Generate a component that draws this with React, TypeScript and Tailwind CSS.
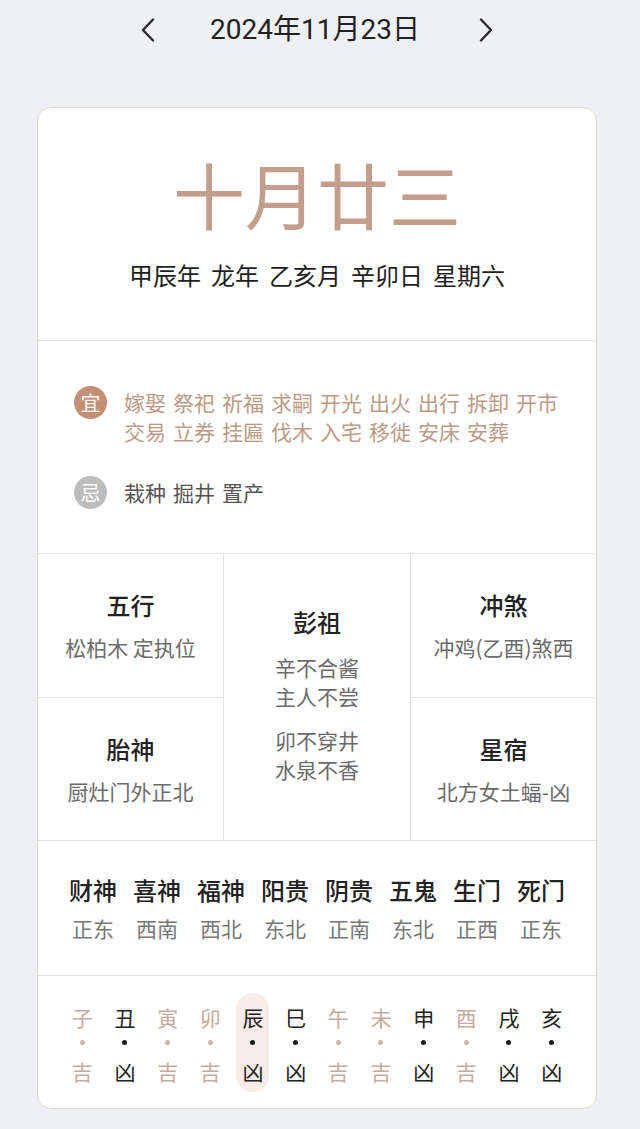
import React from 'react';

const yi = ['嫁娶', '祭祀', '祈福', '求嗣', '开光', '出火', '出行', '拆卸', '开市', '交易', '立券', '挂匾', '伐木', '入宅', '移徙', '安床', '安葬'];
const ji = ['栽种', '掘井', '置产'];
const gods: [string, string][] = [
  ['财神', '正东'], ['喜神', '西南'], ['福神', '西北'], ['阳贵', '东北'],
  ['阴贵', '正南'], ['五鬼', '东北'], ['生门', '正西'], ['死门', '正东'],
];
const hours: [string, boolean][] = [
  ['子', true], ['丑', false], ['寅', true], ['卯', true], ['辰', false], ['巳', false],
  ['午', true], ['未', true], ['申', false], ['酉', true], ['戌', false], ['亥', false],
];

function Chevron({ dir }: { dir: 'l' | 'r' }) {
  return (
    <svg width="14" height="24" viewBox="0 0 14 24" fill="none">
      <polyline
        points={dir === 'l' ? '12,1.5 2,12 12,22.5' : '2,1.5 12,12 2,22.5'}
        stroke="#2a2a2a"
        strokeWidth="2.4"
        strokeLinecap="round"
        strokeLinejoin="round"
      />
    </svg>
  );
}

function Cell({ title, value, className }: { title: string; value: string; className: string }) {
  return (
    <div className={`flex flex-col items-center justify-center ${className}`}>
      <div className="text-[24px] leading-[24px] font-medium text-[#222]">{title}</div>
      <div className="mt-[20px] text-[21px] leading-[21px] text-[#6b6b6b]">{value}</div>
    </div>
  );
}

export default function App() {
  return (
    <div className="w-[640px] min-h-[1129px] bg-[#eef0f3] font-['Noto_Sans_CJK_SC','Noto_Sans',sans-serif] flex flex-col">
      {/* header */}
      <div className="h-[60px] flex items-center pl-[134px]">
        <div className="w-[28px] flex justify-center"><Chevron dir="l" /></div>
        <div className="w-[306px] text-center text-[28px] leading-[28px] text-[#222] font-['Roboto','Noto_Sans_CJK_SC',sans-serif]">2024年11月23日</div>
        <div className="ml-[4px] w-[28px] flex justify-center"><Chevron dir="r" /></div>
      </div>

      {/* card */}
      <div className="mt-[47px] ml-[37px] w-[560px] rounded-[14px] border border-[#ddd7d3] bg-white overflow-hidden">
        {/* title */}
        <div className="h-[233px] border-b border-[#e4e2e0] flex flex-col items-center pt-[49px]">
          <div className="text-[72px] leading-[72px] font-normal text-[#c49e8c]">十月廿三</div>
          <div className="mt-[34px] flex gap-x-[10px] text-[24px] leading-[24px] text-[#1e1e1e]">
            <span>甲辰年</span><span>龙年</span><span>乙亥月</span><span>辛卯日</span><span>星期六</span>
          </div>
        </div>

        {/* yi / ji */}
        <div className="h-[213px] border-b border-[#e4e2e0] pl-[36px] pt-[47px]">
          <div className="flex items-start">
            <div className="-mt-[2px] w-[33px] h-[33px] shrink-0 rounded-full bg-[#c38f75] text-white text-[20px] leading-none flex items-center justify-center">宜</div>
            <div className="ml-[17px] w-[450px] flex flex-wrap gap-x-[7px] text-[21px] leading-[29px] text-[#bc9a86]">
              {yi.map((w) => <span key={w}>{w}</span>)}
            </div>
          </div>
          <div className="mt-[32px] flex items-start">
            <div className="-mt-[2px] w-[33px] h-[33px] shrink-0 rounded-full bg-[#bdbdbd] text-white text-[20px] leading-none flex items-center justify-center">忌</div>
            <div className="ml-[17px] flex flex-wrap gap-x-[7px] text-[21px] leading-[29px] text-[#555]">
              {ji.map((w) => <span key={w}>{w}</span>)}
            </div>
          </div>
        </div>

        {/* grid */}
        <div className="h-[287px] border-b border-[#e4e2e0] grid grid-cols-[185px_188px_185px]">
          <div className="flex flex-col">
            <Cell title="五行" value="松柏木 定执位" className="h-[144px] border-b border-[#e4e2e0]" />
            <Cell title="胎神" value="厨灶门外正北" className="flex-1" />
          </div>
          <div className="border-x border-[#e4e2e0] flex flex-col items-center justify-center">
            <div className="text-[24px] leading-[24px] font-medium text-[#222]">彭祖</div>
            <div className="mt-[19px] text-[21px] leading-[29px] text-[#6b6b6b] text-center">
              <div>辛不合酱</div>
              <div>主人不尝</div>
              <div className="mt-[15px]">卯不穿井</div>
              <div>水泉不香</div>
            </div>
          </div>
          <div className="flex flex-col">
            <Cell title="冲煞" value="冲鸡(乙酉)煞西" className="h-[144px] border-b border-[#e4e2e0]" />
            <Cell title="星宿" value="北方女土蝠-凶" className="flex-1" />
          </div>
        </div>

        {/* gods */}
        <div className="h-[135px] border-b border-[#e4e2e0] px-[23px] grid grid-cols-8 items-center">
          {gods.map(([n, d], i) => (
            <div key={i} className="flex flex-col items-center">
              <div className="text-[24px] leading-[24px] font-medium text-[#222]">{n}</div>
              <div className="mt-[16px] text-[21px] leading-[21px] text-[#777]">{d}</div>
            </div>
          ))}
        </div>

        {/* hours */}
        <div className="h-[132px] px-[23px] pt-[17px] grid grid-cols-12">
          {hours.map(([h, good], i) => (
            <div key={h} className="flex justify-center">
              <div className={`w-[33px] h-[99px] rounded-full flex flex-col items-center pt-[14px] ${i === 4 ? 'bg-[#f8ece9]' : ''}`}>
                <div className={`text-[21px] leading-[21px] ${good ? 'text-[#c4ab9e]' : 'text-[#222]'}`}>{h}</div>
                <div className={`mt-[12px] w-[5px] h-[5px] rounded-full ${good ? 'bg-[#c6b5ad]' : 'bg-[#1a1a1a]'}`} />
                <div className={`mt-[16px] text-[21px] leading-[21px] ${good ? 'text-[#c4ab9e]' : 'text-[#222]'}`}>{good ? '吉' : '凶'}</div>
              </div>
            </div>
          ))}
        </div>
      </div>
    </div>
  );
}
